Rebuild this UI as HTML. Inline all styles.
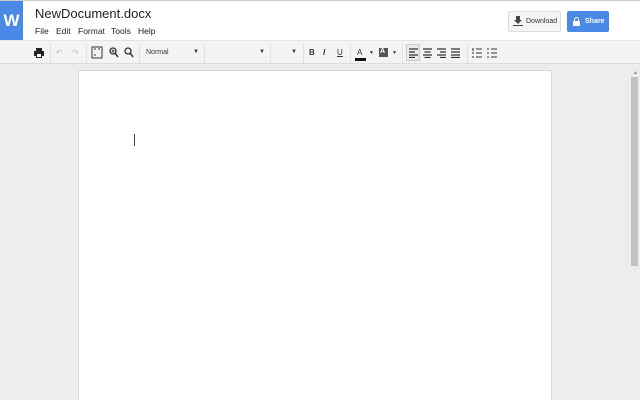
<!DOCTYPE html>
<html style="overflow:hidden;width:640px;height:400px"><head><style>
*{margin:0;padding:0;box-sizing:border-box}
body{width:640px;height:400px;overflow:hidden;background:#ededed;font-family:"Liberation Sans",Arial,sans-serif;position:relative}
.hdr{position:absolute;left:0;top:0;width:640px;height:40px;background:#fff;border-top:1px solid #ccc}
.logo{position:absolute;left:0;top:0;width:23px;height:40px;background:#4a8ae6;color:#fff;font-size:17px;font-weight:bold;text-align:center;line-height:40px}
.title{position:absolute;left:35px;top:5px;font-size:13px;color:#222}
.menu{position:absolute;left:35px;top:25px;font-size:8.5px;color:#222}
.menu span{position:absolute;white-space:nowrap}
.dl{position:absolute;left:508px;top:10px;width:53px;height:21px;background:#f5f5f5;border:1px solid #ddd;border-radius:2px;font-size:7px;color:#333;line-height:19px;padding-left:17px}
.sh{position:absolute;left:567px;top:10px;width:42px;height:21px;background:#4a8ae6;border-radius:2px;font-size:7px;color:#fff;font-weight:bold;line-height:21px;padding-left:18px}
.tb{position:absolute;left:0;top:40px;width:640px;height:24px;background:#f4f4f4;border-top:1px solid #e4e4e4;border-bottom:1px solid #ddd}
.tb .s{position:absolute;top:2px;width:1px;height:20px;background:#e2e2e2}
.tb .t{position:absolute;top:7px;font-size:8px;color:#333}
.page{position:absolute;left:78px;top:70px;width:474px;height:340px;background:#fff;border:1px solid #d8d8d8}
.cur{position:absolute;left:134px;top:134px;width:1px;height:12px;background:#444}
.sb{position:absolute;left:631px;top:77px;width:7px;height:189px;background:#c2c2c2}
</style></head><body>
<div class="hdr">
<div class="logo">W</div>
<div class="title">NewDocument.docx</div>
<div class="menu"><span style="left:0">File</span><span style="left:21px">Edit</span><span style="left:43px">Format</span><span style="left:76px">Tools</span><span style="left:103px">Help</span></div>
<div class="dl"><svg style="position:absolute;left:4px;top:4px" width="10" height="10" viewBox="0 0 10 10"><path d="M3 0h4v4h2L5 8 1 4h2z M0 9h10v1H0z" fill="#444"/></svg>Download</div>
<div class="sh"><svg style="position:absolute;left:6px;top:6px" width="7" height="9" viewBox="0 0 7 9"><path d="M1 4V2.5a2.5 2.5 0 015 0V4H5V2.5a1.5 1.5 0 00-3 0V4z M0 4h7v5H0z" fill="#fff"/></svg>Share</div>
</div>
<div class="tb">
<svg style="position:absolute;left:34px;top:7px" width="10" height="10" viewBox="0 0 10 10"><path d="M2 0h6v3H2z M0 3h10v5H8v2H2V8H0z" fill="#222"/><rect x="3" y="6" width="4" height="3" fill="#fff"/></svg>
<div class="s" style="left:50px"></div>
<div class="t" style="left:56px;color:#bbb">↶</div><div class="t" style="left:72px;color:#bbb">↷</div>
<div class="s" style="left:86px"></div>
<svg style="position:absolute;left:91px;top:5px" width="12" height="13" viewBox="0 0 12 13"><rect x="1" y="1" width="10" height="11" fill="none" stroke="#333" stroke-width="1"/><path d="M3 3h2M7 3h2M3 9h2" stroke="#333"/></svg>
<svg style="position:absolute;left:109px;top:6px" width="10" height="11" viewBox="0 0 10 11"><circle cx="4" cy="4" r="3" fill="none" stroke="#333" stroke-width="1.3"/><path d="M6 6l3 4" stroke="#333" stroke-width="1.5"/><path d="M2.5 4h3M4 2.5v3" stroke="#333"/></svg>
<svg style="position:absolute;left:124px;top:6px" width="10" height="11" viewBox="0 0 10 11"><circle cx="4" cy="4" r="3" fill="none" stroke="#333" stroke-width="1.3"/><path d="M6 6l3 4" stroke="#333" stroke-width="1.5"/></svg>
<div class="s" style="left:139px"></div>
<div class="t" style="left:146px;font-size:7px;top:8px">Normal</div><div class="t" style="left:193px;font-size:6px;top:8px">▼</div>
<div class="s" style="left:204px"></div>
<div class="t" style="left:259px;font-size:6px;top:8px">▼</div>
<div class="s" style="left:270px"></div>
<div class="t" style="left:291px;font-size:6px;top:8px">▼</div>
<div class="s" style="left:303px"></div>
<div class="t" style="left:309px;font-weight:bold">B</div>
<div class="t" style="left:323px;font-style:italic;font-weight:bold">I</div>
<div class="t" style="left:337px;text-decoration:underline">U</div>
<div class="s" style="left:350px"></div>
<div class="t" style="left:357px">A</div><div style="position:absolute;left:355px;top:17px;width:11px;height:3px;background:#111"></div><div class="t" style="left:369px;font-size:5px;top:9px">▼</div>
<div style="position:absolute;left:379px;top:7px;width:9px;height:9px;background:#555"></div><div class="t" style="left:380px;color:#fff;font-size:7px;top:7px;font-weight:bold">A</div><div class="t" style="left:392px;font-size:5px;top:9px">▼</div>
<div class="s" style="left:402px"></div>
<div style="position:absolute;left:406px;top:3px;width:14px;height:17px;border:1px solid #ccc;background:#eaeaea"></div>
<svg style="position:absolute;left:408px;top:7px" width="60" height="10" viewBox="0 0 60 10" stroke="#333" stroke-width="1.2">
<path d="M1 1h9M1 4h6M1 7h9M1 9.5h6"/>
<path d="M15 1h9M16.5 4h6M15 7h9M16.5 9.5h6"/>
<path d="M29 1h9M32 4h6M29 7h9M32 9.5h6"/>
<path d="M43 1h9M43 4h9M43 7h9M43 9.5h9"/></svg>
<div class="s" style="left:467px"></div>
<svg style="position:absolute;left:472px;top:7px" width="26" height="10" viewBox="0 0 26 10" stroke="#333" stroke-width="1.1">
<path d="M4 1h6M4 5h6M4 9h6M1 0v3M1 4v2M1 8v2"/>
<path d="M19 1h6M19 5h6M19 9h6M15 1h2M15 5h2M15 9h2"/></svg>
</div>
<div class="page"></div>
<div class="cur"></div>
<div style="position:absolute;left:633px;top:70px;font-size:5px;color:#888">▲</div>
<div class="sb"></div>
</body></html>
